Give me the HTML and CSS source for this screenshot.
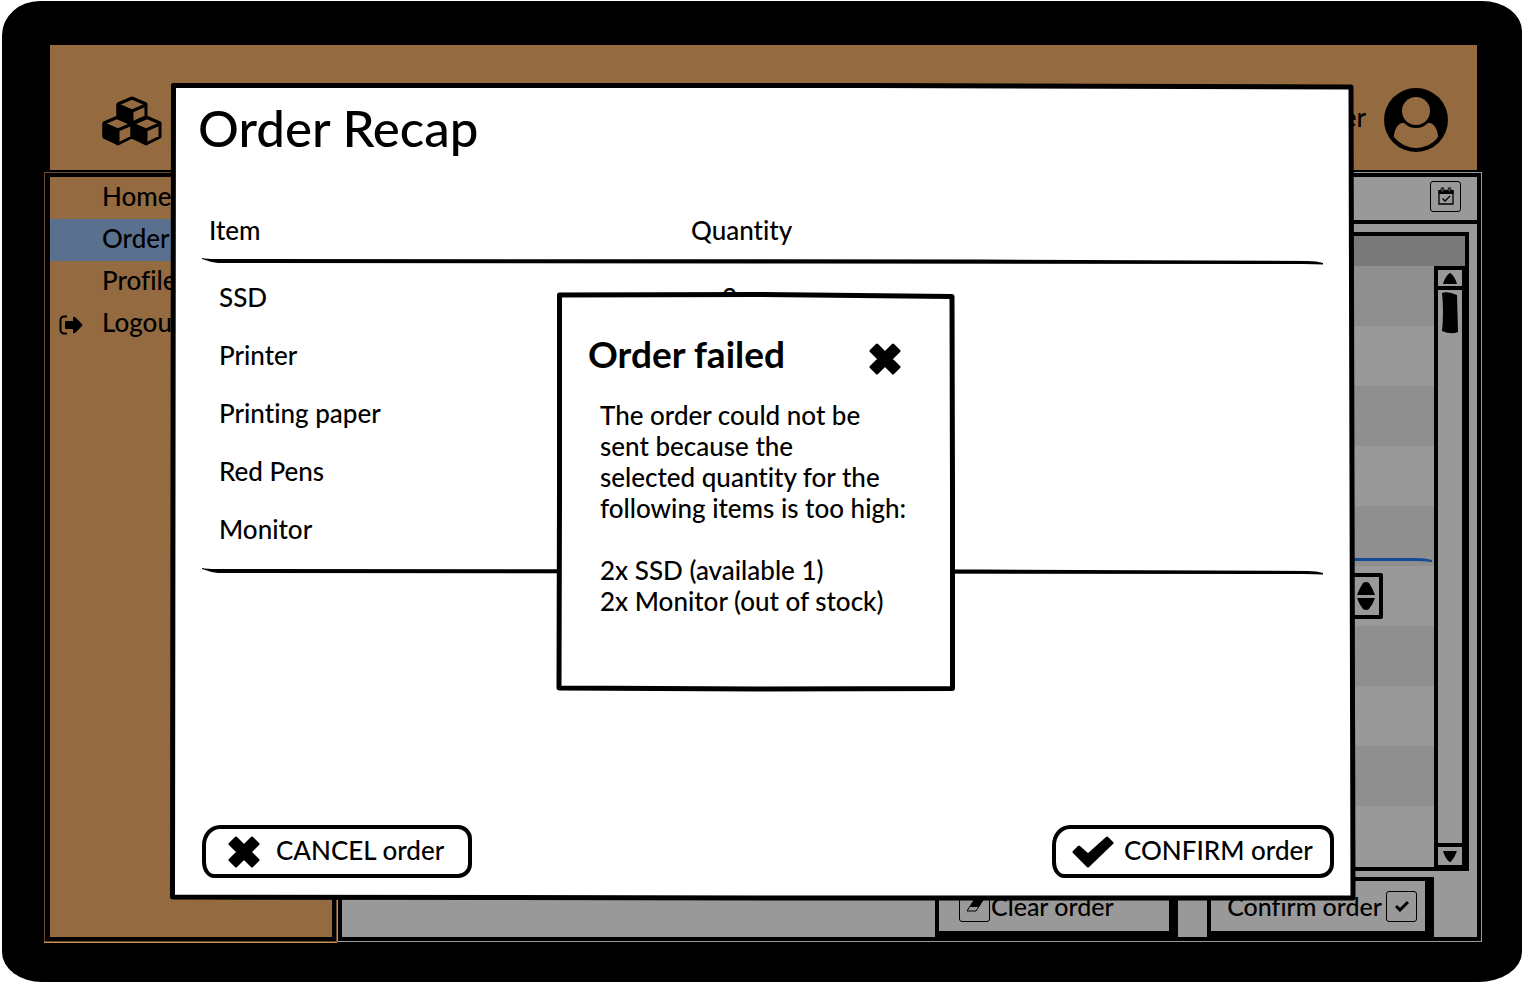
FILE: index.html
```html
<!DOCTYPE html>
<html lang="en">
<head>
<meta charset="utf-8">
<title>Order Recap</title>
<link rel="stylesheet" href="styles.css">
</head>
<body>
<div class="tablet">
  <header class="topbar">
    <svg class="logo" viewBox="0 0 60 50" aria-hidden="true">
      <g stroke="#000" stroke-width="3" stroke-linejoin="round">
        <path fill="none" d="M30 2l14 6v14l-14 6-14-6V8zM16 21l14 6v14l-14 7-14-7V27zM44 21l14 6v14l-14 7-14-7V27z"/>
        <path fill="#000" d="M16 9l14 6v12l-14-6zM2 28l14 6v13L2 41zM30 28l14 6v13l-14-6z"/>
        <path fill="none" d="M30 15l14-6M16 34l14-6M44 34l14-6"/>
      </g>
    </svg>
    <div class="user">
      <span>User</span>
      <svg class="avatar" viewBox="0 0 64 64" aria-hidden="true">
        <circle cx="32" cy="32" r="32"/>
        <circle class="skin" cx="32" cy="23" r="14"/>
        <path class="skin" d="M20 35c-6-1-10 7-10 14 6 7 14 11 22 11s17-4 22-11c0-7-4-15-10-14-3 3-7 5-12 5s-9-2-12-5z"/>
      </svg>
    </div>
  </header>
  <div class="workspace">
    <nav class="sidebar">
      <a href="#home">Home</a>
      <a href="#order" class="current">Order</a>
      <a href="#profile">Profile</a>
      <a href="#logout">
        <svg viewBox="0 0 24 20" aria-hidden="true"><path d="M8 1.500H5a3.500 3.500 0 0 0-3.500 3.500v10A3.500 3.500 0 0 0 5 18.500h3" fill="none" stroke="#000" stroke-width="2"/><path d="M6 7q0-1 1-1h7V3q0-2 2-1l7 7q1 1 0 2l-7 7q-2 1-2-1v-3H7q-1 0-1-1z"/></svg>
        Logout</a>
    </nav>
    <main class="main">
      <div class="toolbar">
        <button class="square" aria-label="Pick date">
          <svg viewBox="0 0 16 18" aria-hidden="true"><path d="M1 4h14v13H1z" fill="none" stroke="#000" stroke-width="1.300"/><path d="M.5 3h15v4H.5z"/><rect x="3" y=".5" width="3" height="4.500" rx="1.500" fill="#444" stroke="#000" stroke-width=".7"/><rect x="10" y=".5" width="3" height="4.500" rx="1.500" fill="#444" stroke="#000" stroke-width=".7"/><path d="M4.500 11.500l2.500 2.500 5-5" fill="none" stroke="#000" stroke-width="1.300"/></svg>
        </button>
      </div>
      <div class="content">
        <div class="list">
          <div class="list-head"></div>
          <div class="list-body">
            <div class="rows">
              <div class="row"></div><div class="row"></div><div class="row"></div><div class="row"></div>
              <div class="row"><svg class="mark" viewBox="0 0 100 4" preserveAspectRatio="none" aria-hidden="true"><path d="M0 0h83q11 0 17 2v2q-9-1-17-1H0z"/></svg></div>
              <div class="row">
                <div class="stepper"><svg viewBox="0 0 18 28" aria-hidden="true"><path d="M0 13Q2 7 6 1q3-2 6 0 4 6 6 12zM0 16h18q-2 6-6 11-3 2-6 0-4-5-6-11z"/></svg></div>
              </div>
              <div class="row"></div><div class="row"></div><div class="row"></div><div class="row"></div>
            </div>
            <div class="scroll">
              <span class="arrow"><svg viewBox="0 0 14 11" aria-hidden="true"><path d="M0 11Q2 4 6 .5q1-1 2 0Q12 4 14 11z"/></svg></span>
              <span class="track"><svg viewBox="0 0 16 42" aria-hidden="true"><path d="M0 1q6-2 15 2l1 37q-7 3-16-1 2-19 0-38z"/></svg></span>
              <span class="arrow down"><svg viewBox="0 0 14 11" aria-hidden="true"><path d="M0 0h14q-2 6-6 10.500-1 1-2 0Q2 7 0 0z"/></svg></span>
            </div>
          </div>
        </div>
        <div class="actions">
          <button class="action clear"><span class="square"><svg viewBox="0 0 18 14" aria-hidden="true"><path d="M8 1h9L10 12H1z" fill="none" stroke="#000"/><path d="M8 1h9l-4 7H4z"/></svg></span>Clear order</button>
          <button class="action confirm">Confirm order<span class="square"><svg viewBox="0 0 14 12" aria-hidden="true"><path d="M1 6l4 4 8-8" fill="none" stroke="#000" stroke-width="3"/></svg></span></button>
        </div>
      </div>
    </main>
  </div>
</div>

<section class="recap" role="dialog" aria-labelledby="recap-title">
  <svg class="frame" viewBox="0 0 1185 816" preserveAspectRatio="none" aria-hidden="true"><path d="M2.500 1.500L700 1.500 1181 3 1182 400 1183 814 600 814 1.500 813 2 400z"/></svg>
  <h1 id="recap-title">Order Recap</h1>
  <table>
    <thead>
      <tr><th class="item">Item</th><th>Quantity</th></tr>
      <tr class="rule"><td colspan="2"><svg viewBox="0 0 1120 7" preserveAspectRatio="none" aria-hidden="true"><path d="M0 0q5 1 14 1l766 .5 324 1.500q10 0 16 2v1.500q-8-.5-20-.5L600 5.500 16 5Q8 4 0 1z"/></svg></td></tr>
    </thead>
    <tbody>
      <tr><td>SSD</td><td class="count">2</td></tr>
      <tr><td>Printer</td><td></td></tr>
      <tr><td>Printing paper</td><td></td></tr>
      <tr><td>Red Pens</td><td></td></tr>
      <tr><td>Monitor</td><td></td></tr>
      <tr class="rule last"><td colspan="2"><svg viewBox="0 0 1120 7" preserveAspectRatio="none" aria-hidden="true"><path d="M0 0q5 1 14 1l766 .5 324 1.500q10 0 16 2v1.500q-8-.5-20-.5L600 5.500 16 5Q8 4 0 1z"/></svg></td></tr>
    </tbody>
  </table>
  <footer>
    <button class="choice cancel"><svg viewBox="0 0 32 32" aria-hidden="true"><path class="cross" d="M8 2l8 8 8-8 6 6-8 8 8 8-6 6-8-8-8 8-6-6 8-8-8-8z"/></svg>CANCEL order</button>
    <button class="choice accept"><svg class="tick" viewBox="0 0 42 32" aria-hidden="true"><path class="cross" d="M2 16l5-5 9 8L35 2l5 5-24 23z"/></svg>CONFIRM order</button>
  </footer>
</section>

<section class="alert" role="alertdialog" aria-labelledby="alert-title">
  <svg class="frame" viewBox="0 0 398 398" preserveAspectRatio="none" aria-hidden="true"><path d="M2.500 2L200 1.500 395 3.500 395.500 200 395.500 395.500 200 396 2 395 2.500 200z"/></svg>
  <div class="alert-head">
    <h2 id="alert-title">Order failed</h2>
    <button class="close" aria-label="Close"><svg viewBox="0 0 32 32" aria-hidden="true"><path class="cross" d="M8 2l8 8 8-8 6 6-8 8 8 8-6 6-8-8-8 8-6-6 8-8-8-8z"/></svg></button>
  </div>
  <p>The order could not be<br>sent because the<br>selected quantity for the<br>following items is too high:</p>
  <p>2x SSD (available 1)<br>2x Monitor (out of stock)</p>
</section>
</body>
</html>
```

FILE: styles.css
```css
* { box-sizing: border-box; }

body {
  margin: 0;
  background: #fff;
  color: #000;
  font: 500 26px/32px Lato, "Open Sans", sans-serif;
  font-variant-ligatures: none;
}

svg { display: block; }
button { font: inherit; color: inherit; padding: 0; }
.cross { stroke: #000; stroke-width: 3px; stroke-linejoin: round; }

.tablet {
  display: flex;
  flex-direction: column;
  min-height: calc(100vh - 3px);
  margin: 1px 2px 2px;
  padding: 44px 40px 40px 42px;
  background: #000;
  border-radius: 38px 40px 44px 40px / 34px 30px 30px 30px;
}

.topbar {
  display: flex;
  justify-content: space-between;
  align-items: flex-start;
  height: 125px;
  margin: 0 5px 2px 6px;
  padding: 43px 29px 0 52px;
  background: #946b40;
}
.logo { width: 60px; height: 50px; margin-top: 8px; }
.user { display: flex; gap: 18px; line-height: 58px; }
.avatar { width: 64px; height: 64px; }
.skin { fill: #946b40; }

.workspace { display: flex; flex: 1; }

.sidebar {
  width: 293px;
  background: #946b40;
  border: 5px solid #000;
  border-left-width: 6px;
  outline: 1px solid #6b4b2b;
  outline-offset: -1px;
  box-shadow: 0 1px #c98e54;
}
.sidebar a {
  display: flex;
  align-items: center;
  position: relative;
  height: 42px;
  padding: 0 0 4px 52px;
  color: inherit;
  text-decoration: none;
}
.sidebar .current { background: #59708f; }
.sidebar svg { position: absolute; left: 9px; width: 24px; height: 20px; top: 12px; }

.main {
  display: flex;
  flex: 1;
  flex-direction: column;
  background: #999;
  border: 5px solid #000;
  outline: 1px solid #999;
  outline-offset: -1px;
}
.toolbar {
  display: flex;
  justify-content: flex-end;
  align-items: center;
  height: 47px;
  padding: 0 16px 5px 0;
  border-bottom: 4px solid #000;
}
.square {
  display: grid;
  place-items: center;
  width: 31px;
  height: 31px;
  background: none;
  border: 1px solid #000;
  border-radius: 3px;
}
.toolbar svg { width: 16px; height: 18px; }

.content {
  display: flex;
  flex: 1;
  flex-direction: column;
  padding: 8px 0 0 20px;
}
.list {
  display: flex;
  flex: 1;
  flex-direction: column;
  margin-right: 8px;
  border: 4px solid #000;
}
.list-head { height: 30px; background: #797979; }
.list-body { display: flex; flex: 1; }
.rows { flex: 1; }
.row { position: relative; height: 60px; }
.row:nth-child(odd) { background: #8f8f8f; }
.row:has(.stepper) { padding-top: 7px; }
.mark { position: absolute; right: 2px; bottom: 4px; width: 100px; height: 4px; fill: #154a96; }
.stepper {
  display: flex;
  justify-content: flex-end;
  align-items: center;
  width: 90px;
  height: 46px;
  margin: 0 51px 0 auto;
  padding-right: 4px;
  border: 4px solid #000;
  border-radius: 2px;
}
.stepper svg { width: 18px; height: 28px; }

.scroll {
  display: flex;
  flex-direction: column;
  width: 31px;
  border: solid #000;
  border-width: 4px 3px 0 4px;
}
.arrow { display: grid; place-items: center; height: 20px; border-bottom: 4px solid #000; }
.arrow svg { width: 14px; height: 11px; }
.arrow.down { border-bottom-width: 2px; border-top: 4px solid #000; height: 24px; }
.track { flex: 1; padding: 2px 4px; }
.track svg { width: 16px; height: 42px; }

.actions {
  display: flex;
  justify-content: flex-end;
  gap: 29px;
  padding: 6px 43px 0 0;
}
.action {
  display: flex;
  align-items: center;
  height: 60px;
  font-size: 25px;
  background: #999;
  border: solid #000;
  border-width: 4px 9px 6px 4px;
}
.clear { width: 243px; padding-left: 20px; gap: 1px; }
.clear svg { width: 18px; height: 14px; }
.confirm { width: 227px; justify-content: flex-end; gap: 4px; padding-right: 8px; }
.confirm svg { width: 14px; height: 12px; }

.frame {
  position: absolute;
  inset: 0;
  width: 100%;
  height: 100%;
  z-index: -1;
  overflow: visible;
  fill: #fff;
  stroke: #000;
  stroke-width: 5px;
  stroke-linejoin: round;
}

.recap {
  position: absolute;
  inset: 84px 169px 84px 171px;
  z-index: 1;
  display: flex;
  flex-direction: column;
  padding: 16px 21px 22px 31px;
}
.recap h1 { margin: 0 0 44px -4px; font-size: 51px; line-height: 56px; font-weight: 500; }
.recap table { border-collapse: collapse; table-layout: fixed; width: calc(100% - 11px); }
.recap th { padding: 2px 0 0 7px; font-weight: 500; text-align: left; height: 58px; }
.recap th.item { width: 482px; }
.recap td { padding: 0 0 0 17px; height: 58px; }
.recap td.count { padding-left: 38px; }
.recap .rule td { padding: 0; height: 10px; vertical-align: top; }
.recap .last td { padding-top: 10px; }
.rule svg { width: 100%; height: 7px; }

.recap footer { display: flex; justify-content: space-between; margin-top: auto; }
.choice {
  display: flex;
  align-items: center;
  height: 53px;
  padding: 0 16px 4px 22px;
  background: #fff;
  border: 4px solid #000;
  border-radius: 18px 14px 14px 12px / 20px 14px 14px 16px;
}
.choice svg { width: 32px; height: 32px; margin-top: 4px; }
.choice .tick { width: 42px; }
.cancel { width: 270px; gap: 16px; }
.accept { width: 282px; gap: 10px; padding-left: 16px; }

.alert {
  position: absolute;
  top: 293px;
  left: 0;
  right: 12px;
  z-index: 2;
  width: 398px;
  min-height: 398px;
  margin: 0 auto;
  padding: 40px 20px 40px 43px;
  line-height: 31px;
}
.alert-head { display: flex; justify-content: space-between; margin: 0 34px 25px -12px; }
.alert h2 { margin: 0; font-size: 37px; line-height: 42px; }
.close { width: 32px; height: 32px; margin-top: 10px; background: none; border: 0; }
.alert p { margin: 0 0 31px; }
```
